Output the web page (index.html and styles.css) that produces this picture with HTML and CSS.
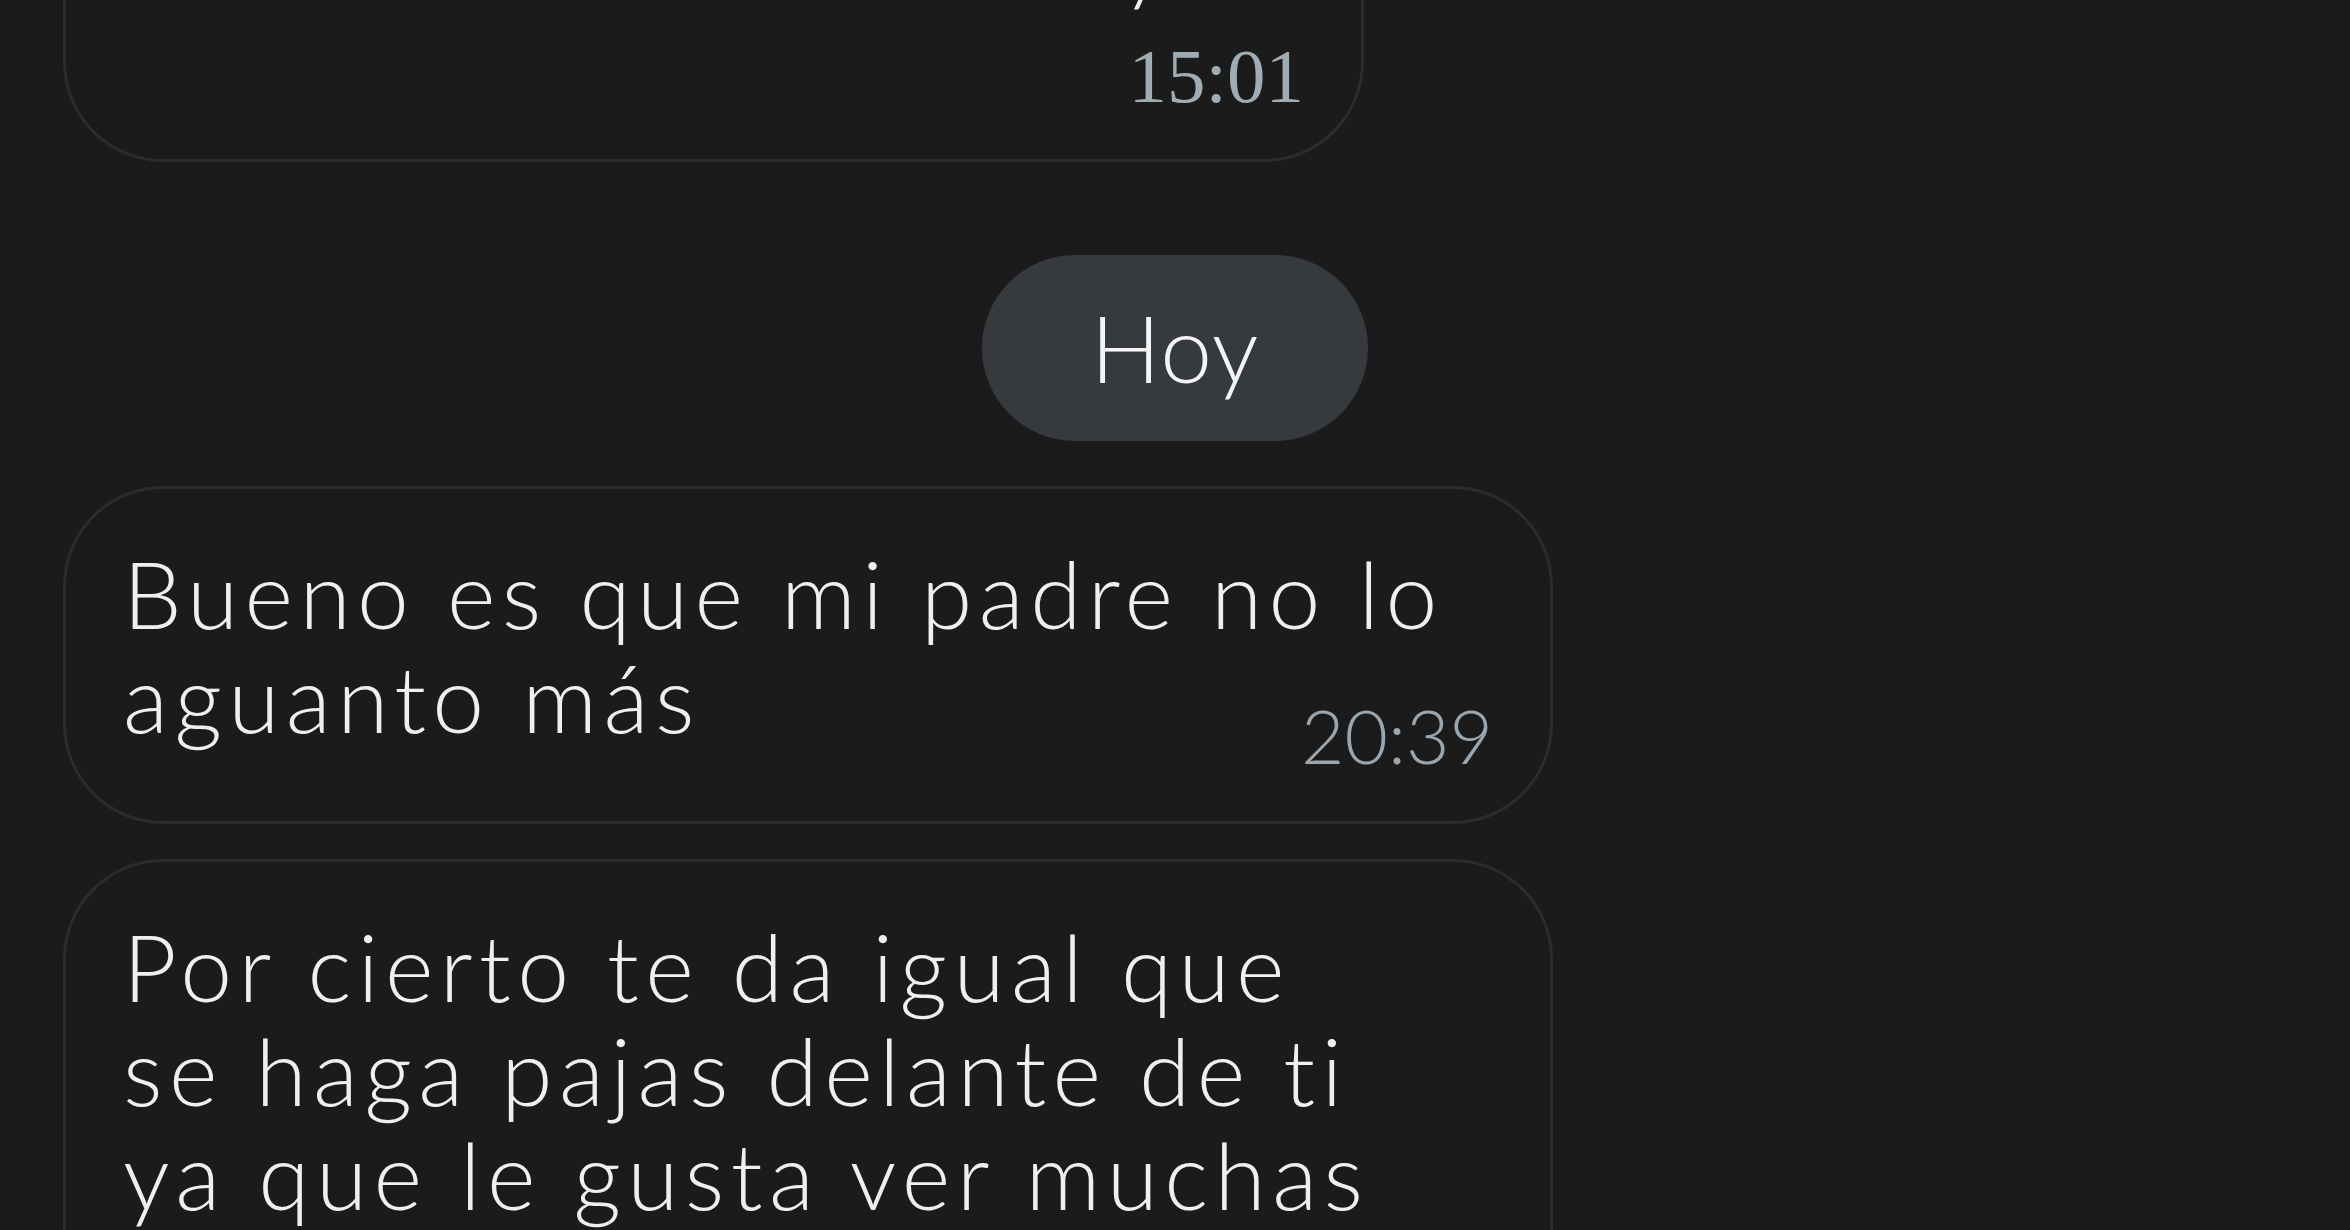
FILE: index.html
```html
<!DOCTYPE html>
<html>
<head>
    <title>Chat</title>
    <link rel="stylesheet" href="styles.css">
</head>
<body>
    <div class="chat">
        <div class="bubble bubble-legacy">
            <p class="text">Vale, no te preocupes<br>Ahora lo hablamos hoy<span class="meta">15:01</span></p>
        </div>

        <div class="day">Hoy</div>

        <div class="bubble">
            <p class="text">Bueno es que mi padre no lo aguanto más<span class="meta">20:39</span></p>
        </div>

        <div class="bubble">
            <p class="text">Por cierto te da igual que<br>se haga pajas delante de ti<br>ya que le gusta ver muchas<span class="meta">20:40</span></p>
        </div>
    </div>
</body>
</html>
```

FILE: styles.css
```css
body {
  margin: 0;
  padding: 0;
  height: 1230px;
  overflow: hidden;
  background: #1b1b1b;
  font-family: Lato, "Open Sans", sans-serif;
  font-weight: 300;
  color: #efefef;
}

/* scrolled chat column */
.chat {
  display: flex;
  flex-direction: column;
  align-items: flex-start;
  padding: 0 63px;
  margin-top: -254px;
}

.bubble {
  width: fit-content;
  max-width: 1490px;
  box-sizing: border-box;
  display: flow-root;
  border: 3px solid #2a2c2f;
  border-radius: 100px;
  padding: 52px 100px 46px 57px;
}

.bubble + .bubble {
  margin-top: 35px;
}

.text {
  margin: 0;
  font-size: 93px;
  line-height: 104px;
  letter-spacing: 6.4px;
}

.meta {
  float: right;
  margin: 50px -43px 0 0;
  font-size: 75px;
  line-height: 80px;
  letter-spacing: 0;
  color: #9aa5ad;
}

/* older message, timestamp on its own row */
.bubble-legacy {
  width: 1301px;
  padding-bottom: 43px;
}

.bubble-legacy .meta {
  float: none;
  display: block;
  text-align: right;
  margin-top: 27px;
  font-family: "Liberation Serif", serif;
  font-weight: 400;
  font-size: 77px;
  color: #a0acb4;
}

.day {
  align-self: center;
  margin: 93px 0 45px;
  padding: 40px 108px 42px;
  border-radius: 100px;
  background: #363a3e;
  font-size: 93px;
  line-height: 104px;
  letter-spacing: 1px;
  color: #f4f4f4;
}
```
